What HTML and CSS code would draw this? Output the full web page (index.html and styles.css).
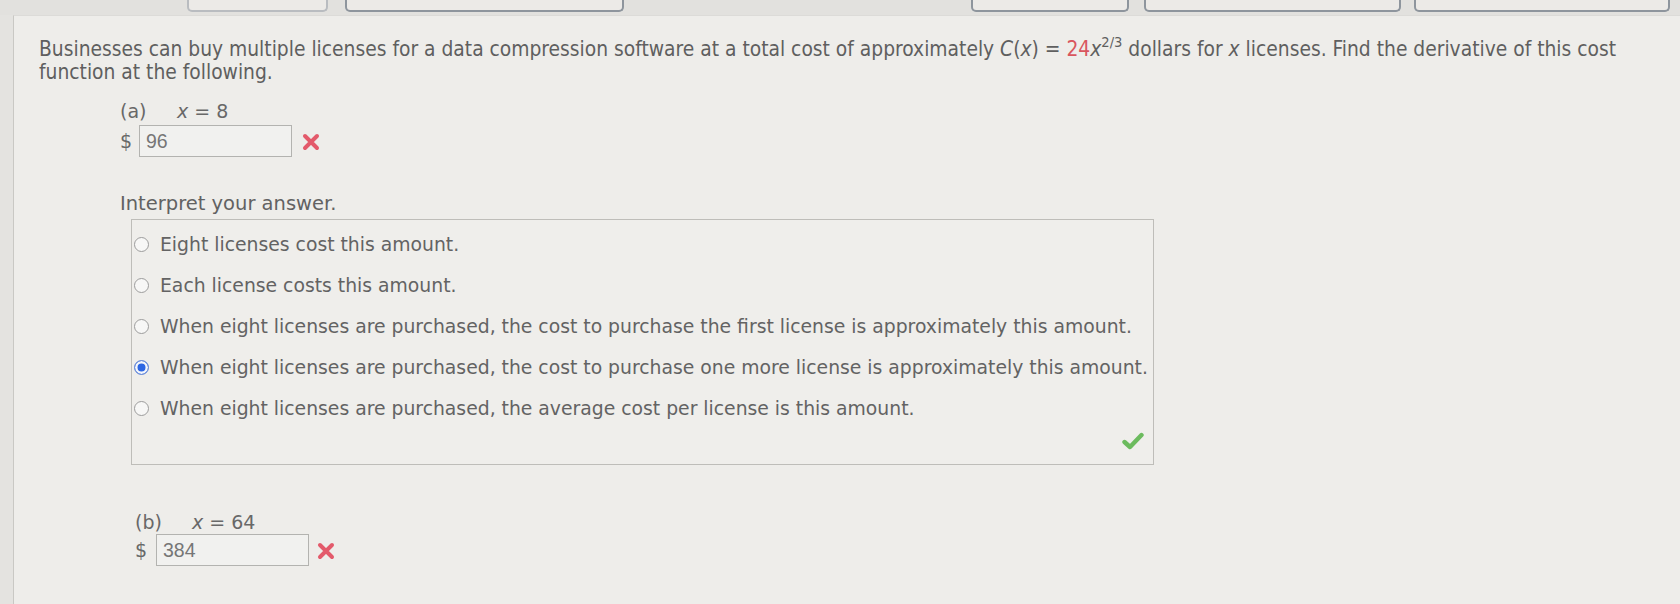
FILE: index.html
```html
<!DOCTYPE html>
<html lang="en">
<head>
<meta charset="utf-8">
<title>Derivative of cost function</title>
<link rel="stylesheet" href="styles.css">
</head>
<body>
<div class="top">
  <div class="tab tab1"></div>
  <div class="tab tab2"></div>
  <div class="tab tab3"></div>
  <div class="tab tab4"></div>
  <div class="tab tab5"></div>
</div>
<div class="page">
  <div class="panel">
    <p class="intro">Businesses can buy multiple licenses for a data compression software at a total cost of approximately <i>C</i>(<i>x</i>) = <span class="red">24</span><i>x</i><sup>2/3</sup> dollars for <i>x</i> licenses. Find the derivative of this cost<br>function at the following.</p>

    <div class="part part-a">
      <div class="label"><span class="letter">(a)</span><span class="eq"><i>x</i> = 8</span></div>
      <div class="answer">
        <span class="dollar">$</span>
        <span class="input">96</span>
        <svg class="wrong" width="18" height="18" viewBox="0 0 18 18"><path d="M3 3 L15 15 M15 3 L3 15" stroke="#e35a6b" stroke-width="4" stroke-linecap="round"/></svg>
      </div>
      <div class="interp">Interpret your answer.</div>
      <div class="options">
        <div class="opt"><span class="radio"></span>Eight licenses cost this amount.</div>
        <div class="opt"><span class="radio"></span>Each license costs this amount.</div>
        <div class="opt"><span class="radio"></span>When eight licenses are purchased, the cost to purchase the first license is approximately this amount.</div>
        <div class="opt"><span class="radio on"></span>When eight licenses are purchased, the cost to purchase one more license is approximately this amount.</div>
        <div class="opt"><span class="radio"></span>When eight licenses are purchased, the average cost per license is this amount.</div>
        <div class="check-row">
          <svg class="check" width="22" height="18" viewBox="0 0 22 18"><path d="M2.5 10 L8 15 L19.5 3" fill="none" stroke="#6cbb5e" stroke-width="4.4" stroke-linecap="round" stroke-linejoin="round"/></svg>
        </div>
      </div>
    </div>

    <div class="part part-b">
      <div class="label"><span class="letter">(b)</span><span class="eq"><i>x</i> = 64</span></div>
      <div class="answer">
        <span class="dollar">$</span>
        <span class="input">384</span>
        <svg class="wrong" width="18" height="18" viewBox="0 0 18 18"><path d="M3 3 L15 15 M15 3 L3 15" stroke="#e35a6b" stroke-width="4" stroke-linecap="round"/></svg>
      </div>
    </div>
  </div>
</div>
</body>
</html>
```

FILE: styles.css
```css
html, body {
  margin: 0;
  padding: 0;
}
body {
  width: 1680px;
  height: 604px;
  overflow: hidden;
  background: #e4e3e0;
  font-family: "DejaVu Sans", Verdana, sans-serif;
  color: #5e5e5e;
}

.top {
  height: 15px;
  display: flex;
  align-items: flex-start;
  background: #e2e1de;
}
.tab {
  height: 10px;
  border: 2px solid #8e959d;
  border-top: none;
  border-radius: 0 0 5px 5px;
  background: #eceae7;
  flex: none;
}
.tab1 { margin-left: 187px; width: 137px; border-color: #b9bcc0; }
.tab2 { margin-left: 17px; width: 275px; }
.tab3 { margin-left: 347px; width: 154px; }
.tab4 { margin-left: 15px; width: 253px; }
.tab5 { margin-left: 13px; width: 252px; }

.page {
  display: flex;
  height: 589px;
}
.panel {
  margin-left: 13px;
  flex: 1;
  border-left: 1px solid #c9c8c4;
  border-top: 1px solid #dcdbd8;
  background: #eeedea;
  padding-left: 25px;
  padding-top: 22px;
}

.intro {
  margin: 0;
  font-family: "DejaVu Sans Condensed", "DejaVu Sans", sans-serif;
  font-size: 20.8px;
  line-height: 23px;
  color: #5f5f5f;
}
.intro i {
  font-style: italic;
}
.red {
  color: #d9565e;
}
sup {
  font-size: 0.7em;
  line-height: 0;
  vertical-align: 0.65em;
}

.part {
  display: flex;
  flex-direction: column;
  align-items: flex-start;
}
.part-a {
  margin-left: 81px;
  margin-top: 16px;
}
.part-b {
  margin-left: 96px;
  margin-top: 46px;
}

.label {
  font-size: 19px;
  line-height: 23px;
  color: #686868;
  display: flex;
}
.letter {
  width: 57px;
}
.eq i {
  font-style: italic;
}

.answer {
  display: flex;
  align-items: center;
  margin-top: 2px;
  height: 32px;
}
.part-b .answer {
  margin-top: 0;
}
.dollar {
  font-size: 19px;
  color: #686868;
  width: 19px;
}
.part-b .dollar {
  width: 21px;
}
.input {
  box-sizing: border-box;
  width: 153px;
  height: 32px;
  border: 1px solid #b3b3b0;
  background: #f1f1ef;
  font-family: "Liberation Sans", Arial, sans-serif;
  font-size: 19.5px;
  line-height: 30px;
  padding-left: 6px;
  color: #767676;
}
.wrong {
  margin-left: 10px;
  margin-top: 2px;
}
.part-b .wrong {
  margin-left: 8px;
}

.interp {
  margin-top: 35px;
  font-size: 19.5px;
  line-height: 23px;
  color: #626262;
}

.options {
  box-sizing: border-box;
  margin-top: 4px;
  margin-left: 11px;
  width: 1023px;
  height: 246px;
  border: 1px solid #bebdb9;
  background: #efeeeb;
  padding-top: 4px;
}
.opt {
  display: flex;
  align-items: center;
  height: 41px;
  font-size: 18.8px;
  color: #636363;
  white-space: nowrap;
}
.radio {
  box-sizing: border-box;
  width: 15px;
  height: 15px;
  border-radius: 50%;
  border: 1.5px solid #9c9c9c;
  background: #f7f7f6;
  margin-left: 2px;
  margin-right: 11px;
  flex: none;
}
.radio.on {
  border: 1.5px solid #6f8fd6;
  background: #2c66e3;
  box-shadow: inset 0 0 0 2.5px #f4f6fb;
}
.check-row {
  display: flex;
  justify-content: flex-end;
  padding-right: 9px;
  padding-top: 3px;
}
```
